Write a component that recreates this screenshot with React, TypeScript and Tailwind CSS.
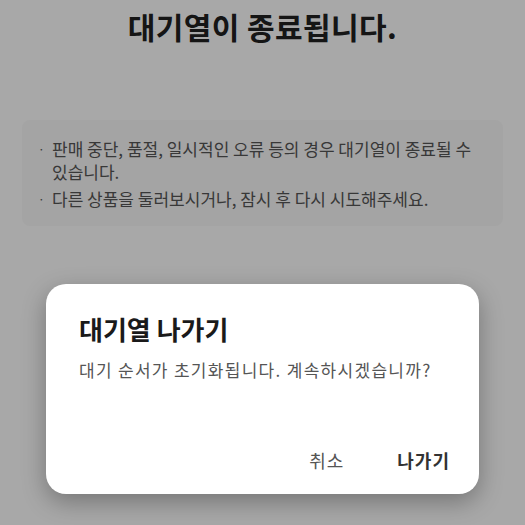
import React from "react";

const font = { fontFamily: '"Noto Sans CJK KR", "Noto Sans", sans-serif' };

export default function App() {
  return (
    <div className="relative h-[525px] w-full overflow-hidden bg-white" style={font}>
      <div className="pt-[6px] text-center text-[30px] font-bold leading-[40px] tracking-[0.4px] text-[#202020]">
        대기열이 종료됩니다.
      </div>
      <div className="mx-[22px] mt-[74px] rounded-lg bg-[#f9f9f9] pb-[16px] pl-[16px] pr-[20px] pt-[17px] text-[17px] font-normal leading-[23px] text-[#555] break-keep">
        <div className="flex">
          <span className="w-[14px] shrink-0 text-[12px]">·</span>
          <span>판매 중단, 품절, 일시적인 오류 등의 경우 대기열이 종료될 수 있습니다.</span>
        </div>
        <div className="mt-[4px] flex">
          <span className="w-[14px] shrink-0 text-[12px]">·</span>
          <span>다른 상품을 둘러보시거나, 잠시 후 다시 시도해주세요.</span>
        </div>
      </div>

      <div className="absolute inset-0 bg-black/[0.34]" />

      <div className="absolute left-[46px] top-[284px] flex h-[210px] w-[433px] flex-col rounded-[20px] bg-white px-[33px] pt-[27px] shadow-[0_8px_24px_rgba(0,0,0,0.3)]">
        <div className="text-[26px] font-semibold leading-[36px] text-[#1a1a1a]">대기열 나가기</div>
        <div className="mt-[11px] text-[17px] font-normal leading-[24px] tracking-[1.3px] text-[#555]">
          대기 순서가 초기화됩니다. 계속하시겠습니까?
        </div>
        <div className="-mr-[4px] mb-[22px] mt-auto flex justify-end gap-[53px] text-[18px] leading-[24px] tracking-[1px]">
          <button className="font-normal text-[#555]">취소</button>
          <button className="font-bold text-[#333]">나가기</button>
        </div>
      </div>
    </div>
  );
}
